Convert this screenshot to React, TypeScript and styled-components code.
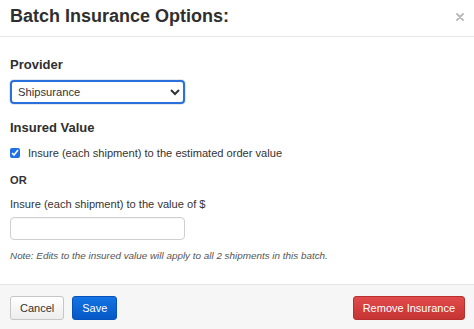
import React from "react";
import styled, { createGlobalStyle } from "styled-components";

const Global = createGlobalStyle`
  html, body { margin: 0; padding: 0; background: #fff; }
  body { font-family: "Liberation Sans", Arial, sans-serif; color: #333; }
  * { box-sizing: border-box; }
`;

const Modal = styled.div`
  width: 474px;
  height: 329px;
  display: flex;
  flex-direction: column;
  background: #fff;
`;

const Header = styled.div`
  height: 37px;
  display: flex;
  align-items: flex-start;
  justify-content: space-between;
  padding: 6px 10px 0 10px;
  border-bottom: 1px solid #e6e6e6;
`;

const Title = styled.h1`
  margin: 0;
  font-weight: 700;
  font-size: 18px;
  line-height: 20px;
  color: #2f2f2f;
`;

const Close = styled.button`
  border: 0;
  background: none;
  padding: 0;
  margin-top: 7px;
  width: 8px;
  height: 8px;
  display: flex;
  cursor: pointer;
`;

const Body = styled.div`
  flex: 1;
  padding: 20px 10px 0 10px;
  display: flex;
  flex-direction: column;
  align-items: flex-start;
`;

const SectionTitle = styled.h2<{ $gap?: number }>`
  margin: ${(p) => p.$gap ?? 0}px 0 0 0;
  font-size: 13px;
  line-height: 16px;
  font-weight: 700;
  color: #2f2f2f;
`;

const Select = styled.select`
  margin-top: 7px;
  width: 175px;
  height: 24px;
  font-family: "Liberation Sans", Arial, sans-serif;
  font-size: 11.2px;
  color: #333;
  border: 2px solid #2a6fdc;
  border-radius: 4px;
  box-shadow: 0 0 0 1px #e3e8f0;
  background: #fff;
  padding: 0 2px 0 2px;
  outline: none;
`;

const CheckRow = styled.label`
  margin-top: 10px;
  display: flex;
  align-items: center;
  gap: 8px;
  font-size: 11.1px;
  line-height: 14px;
  color: #333;
`;

const Check = styled.input`
  margin: 0;
  width: 10px;
  height: 10px;
  accent-color: #1f6fe5;
`;

const Or = styled.div`
  margin-top: 13px;
  font-size: 11.1px;
  font-weight: 700;
  line-height: 14px;
`;

const FieldLabel = styled.div`
  margin-top: 10px;
  font-size: 11.1px;
  line-height: 14px;
`;

const TextInput = styled.input`
  margin-top: 6px;
  width: 175px;
  height: 23px;
  border: 1px solid #cfcfcf;
  border-radius: 4px;
  outline: none;
  box-shadow: inset 0 1px 1px rgba(0, 0, 0, 0.04);
`;

const Note = styled.p`
  margin: 9px 0 0 0;
  font-size: 9.9px;
  line-height: 13px;
  font-style: italic;
  color: #555;
`;

const Footer = styled.div`
  height: 45px;
  border-top: 1px solid #e4e4e4;
  background: #f6f6f6;
  display: flex;
  align-items: flex-start;
  padding: 11px 9px 0 10px;
  gap: 8px;
`;

const Button = styled.button<{ $variant: "default" | "primary" | "danger" }>`
  height: 24px;
  padding: 0 9px;
  border-radius: 3px;
  font-family: "Liberation Sans", Arial, sans-serif;
  font-size: 11px;
  cursor: pointer;
  ${(p) =>
    p.$variant === "primary"
      ? `background: linear-gradient(#1474e4, #0558c6); color: #fff; border: 1px solid #0652b8;`
      : p.$variant === "danger"
      ? `background: linear-gradient(#e14a4a, #c63434); color: #fff; border: 1px solid #b73030; margin-left: auto;`
      : `background: linear-gradient(#ffffff, #ededed); color: #333; border: 1px solid #c6c6c6;`}
`;

export default function App() {
  return (
    <>
      <Global />
      <Modal>
        <Header>
          <Title>Batch Insurance Options:</Title>
          <Close aria-label="Close">
            <svg width="8" height="8" viewBox="0 0 8 8">
              <path d="M1 1L7 7M7 1L1 7" stroke="#b9b9b9" strokeWidth="1.8" strokeLinecap="round" />
            </svg>
          </Close>
        </Header>
        <Body>
          <SectionTitle>Provider</SectionTitle>
          <Select defaultValue="Shipsurance">
            <option>Shipsurance</option>
          </Select>
          <SectionTitle $gap={16}>Insured Value</SectionTitle>
          <CheckRow>
            <Check type="checkbox" defaultChecked />
            Insure (each shipment) to the estimated order value
          </CheckRow>
          <Or>OR</Or>
          <FieldLabel>Insure (each shipment) to the value of $</FieldLabel>
          <TextInput type="text" />
          <Note>Note: Edits to the insured value will apply to all 2 shipments in this batch.</Note>
        </Body>
        <Footer>
          <Button $variant="default">Cancel</Button>
          <Button $variant="primary">Save</Button>
          <Button $variant="danger">Remove Insurance</Button>
        </Footer>
      </Modal>
    </>
  );
}
